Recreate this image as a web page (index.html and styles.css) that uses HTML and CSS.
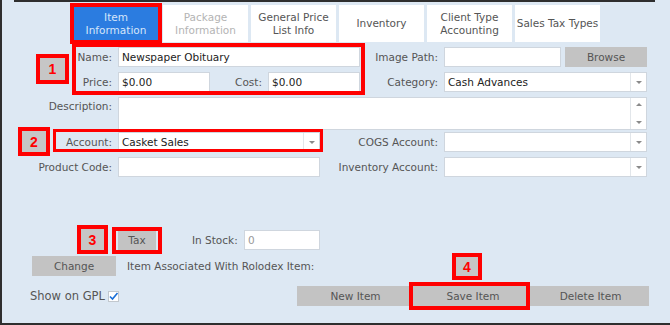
FILE: index.html
```html
<!DOCTYPE html>
<html lang="en">
<head>
  <meta charset="UTF-8" />
  <title>Item Information</title>
  <link rel="stylesheet" href="styles.css">
</head>
<body>

  <div class="window">
    <div class="topline"></div>

    <div class="tabs">
      <div class="tab active">Item<br>Information</div>
      <div class="tab disabled">Package<br>Information</div>
      <div class="tab">General Price<br>List Info</div>
      <div class="tab">Inventory</div>
      <div class="tab">Client Type<br>Accounting</div>
      <div class="tab">Sales Tax Types</div>
    </div>

    <div class="form">
      <div class="row">
        <span class="lbl">Name:</span>
        <div class="field w-name">Newspaper Obituary</div>
        <span class="lbl-r">Image Path:</span>
        <div class="field w-path"></div>
        <div class="btn browse">Browse</div>
      </div>

      <div class="row">
        <span class="lbl">Price:</span>
        <div class="field w-money">$0.00</div>
        <span class="lbl-cost">Cost:</span>
        <div class="field w-money">$0.00</div>
        <span class="lbl-r">Category:</span>
        <div class="field select w-right">Cash Advances<span class="drop"></span></div>
      </div>

      <div class="row desc-row">
        <span class="lbl top">Description:</span>
        <div class="field textarea w-desc">
          <span class="scroll"><i class="up"></i><i class="down"></i></span>
        </div>
      </div>

      <div class="row tight">
        <span class="lbl">Account:</span>
        <div class="field select w-acct">Casket Sales<span class="drop"></span></div>
        <span class="lbl-r wide">COGS Account:</span>
        <div class="field select w-right"><span class="drop"></span></div>
      </div>

      <div class="row">
        <span class="lbl">Product Code:</span>
        <div class="field w-acct"></div>
        <span class="lbl-r wide">Inventory Account:</span>
        <div class="field select w-right"><span class="drop"></span></div>
      </div>

      <div class="row stock-row">
        <div class="btn tax">Tax</div>
        <span class="lbl-stock">In Stock:</span>
        <div class="field w-stock muted">0</div>
      </div>

      <div class="row change-row">
        <div class="btn change">Change</div>
        <span class="note">Item Associated With Rolodex Item:</span>
      </div>

      <div class="row bottom-row">
        <span class="gpl">Show on GPL</span>
        <span class="check">
          <svg width="11" height="11" viewBox="0 0 11 11"><path d="M2 5.5 L4.5 8 L9.5 2" fill="none" stroke="#1a6fd8" stroke-width="1.6"/></svg>
        </span>
        <div class="actions">
          <div class="btn">New Item</div>
          <div class="btn">Save Item</div>
          <div class="btn">Delete Item</div>
        </div>
      </div>
    </div>
  </div>

  <!-- callout marks drawn over the form -->
  <div class="mark box1"></div>
  <div class="mark badge b1">1</div>
  <div class="mark box2"></div>
  <div class="mark badge b2">2</div>
  <div class="mark box3"></div>
  <div class="mark badge b3">3</div>
  <div class="mark box4"></div>
  <div class="mark badge b4">4</div>

</body>
</html>
```

FILE: styles.css
```css
* { box-sizing: border-box; }

body {
  margin: 0;
  padding: 0;
  width: 670px;
  height: 325px;
  overflow: hidden;
  position: relative;
  font-family: 'DejaVu Sans', Verdana, sans-serif;
  font-size: 10.5px;
  color: #555;
  background: #dde8f3;
}

.window {
  height: 325px;
  border-left: 2px solid #2e2e2e;
  border-bottom: 2px solid #2e2e2e;
  background: #dde8f3;
}

.topline {
  margin-left: 12px;
  width: 641px;
  height: 2px;
  background: #2e2e2e;
}

/* tabs */
.tabs {
  display: flex;
  gap: 3px;
  margin: 3px 0 0 70px;
}

.tab {
  width: 85px;
  height: 37px;
  background: white;
  display: flex;
  align-items: center;
  justify-content: center;
  text-align: center;
  line-height: 13px;
  color: #555;
}

.tab.active {
  width: 88px;
  background: #2b7ce0;
  color: #d6e6fa;
  outline: 4px solid #ff0000;
  outline-offset: -2px;
}

.tab.disabled {
  color: #b4b4b4;
}

/* form rows */
.form {
  margin-top: 5px;
}

.row {
  display: flex;
  align-items: center;
  height: 20px;
  margin-top: 5px;
}

.row:first-child { margin-top: 0; }

.lbl {
  width: 110px;
  margin-right: 6px;
  text-align: right;
  white-space: nowrap;
}

.lbl.top {
  align-self: flex-start;
  padding-top: 3px;
}

.lbl-r {
  width: 78px;
  margin-right: 6px;
  text-align: right;
  white-space: nowrap;
}

.lbl-r.wide { width: 118px; }

.lbl-cost {
  width: 52px;
  margin-right: 6px;
  text-align: right;
}

.field {
  height: 20px;
  background: white;
  border: 1px solid #cfd6de;
  color: #222;
  padding: 0 3px;
  line-height: 18px;
  white-space: nowrap;
  position: relative;
}

.field.muted { color: #999; }

.w-name { width: 242px; }
.w-path { width: 117px; }
.w-money { width: 92px; }
.w-right { width: 203px; }
.w-acct { width: 202px; }
.w-desc { width: 529px; }
.w-stock { width: 76px; }

.select { padding-right: 18px; }

.drop {
  position: absolute;
  top: 0;
  right: 0;
  width: 16px;
  height: 18px;
  border-left: 1px solid #e2e6ea;
}

.drop::after {
  content: '';
  position: absolute;
  left: 5px;
  top: 8px;
  border-left: 3px solid transparent;
  border-right: 3px solid transparent;
  border-top: 3px solid #8a8a8a;
}

.desc-row { height: 33px; }

.textarea { height: 33px; }

.scroll {
  position: absolute;
  top: 0;
  right: 0;
  width: 16px;
  height: 31px;
  border-left: 1px solid #e2e6ea;
}

.scroll i {
  position: absolute;
  left: 5px;
  border-left: 3px solid transparent;
  border-right: 3px solid transparent;
}

.scroll .up { top: 5px; border-bottom: 3px solid #8a8a8a; }
.scroll .down { bottom: 5px; border-top: 3px solid #8a8a8a; }

.row.tight { margin-top: 2px; }

/* buttons */
.btn {
  height: 20px;
  background: #c3c3c3;
  color: #555;
  display: flex;
  align-items: center;
  justify-content: center;
}

.browse {
  width: 82px;
  margin-left: 4px;
}

.stock-row { margin-top: 53px; }

.tax {
  width: 38px;
  margin-left: 116px;
}

.lbl-stock {
  margin-left: 36px;
  width: 52px;
}

.change-row { margin-top: 6px; }

.change {
  width: 84px;
  margin-left: 30px;
}

.note { margin-left: 11px; }

.bottom-row { margin-top: 10px; }

.gpl {
  margin-left: 28px;
  font-size: 11.5px;
  color: #555;
}

.check {
  width: 11px;
  height: 11px;
  margin-left: 3px;
  background: white;
  border: 1px solid #c2c8ce;
  display: flex;
}

.check svg { margin: -1px; }

.actions {
  display: flex;
  margin-left: auto;
  margin-right: 21px;
}

.actions .btn { width: 117px; }
.actions .btn:nth-child(2) { width: 118px; }

/* callouts */
.mark {
  position: absolute;
  border: 3px solid #ff0000;
}

.box1 { left: 72px; top: 43px; width: 293px; height: 52px; border-width: 4px; }
.box2 { left: 53px; top: 129px; width: 270px; height: 23px; }
.box3 { left: 112px; top: 227px; width: 50px; height: 27px; border-width: 4px; }
.box4 { left: 409px; top: 282px; width: 121px; height: 28px; border-width: 4px; }

.badge {
  background: #c6c6c6;
  color: #ff0000;
  font-family: 'Liberation Sans', Arial, sans-serif;
  font-weight: bold;
  font-size: 14px;
  display: flex;
  align-items: center;
  justify-content: center;
  border-width: 4px;
}

.b1 { left: 36px; top: 54px; width: 33px; height: 30px; }
.b2 { left: 18px; top: 127px; width: 32px; height: 29px; }
.b3 { left: 77px; top: 225px; width: 31px; height: 29px; }
.b4 { left: 452px; top: 253px; width: 30px; height: 27px; }
```
